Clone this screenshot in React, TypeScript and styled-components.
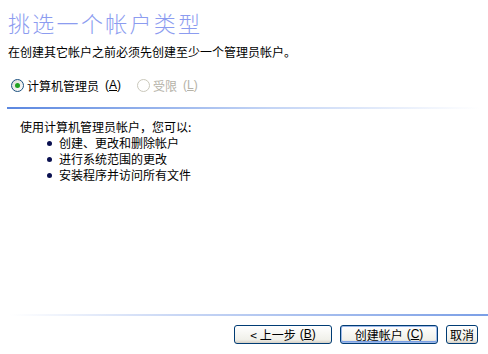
import React from "react";
import styled, { createGlobalStyle } from "styled-components";

const Global = createGlobalStyle`
  html, body {
    margin: 0;
    padding: 0;
    background: #ffffff;
  }
  body {
    font-family: "Liberation Sans", "Noto Sans CJK SC", sans-serif;
    font-size: 12px;
    color: #000;
  }
`;

const Page = styled.div`
  width: 488px;
  height: 354px;
  display: flex;
  flex-direction: column;
  background: #fff;
  overflow: hidden;
`;

const Header = styled.div`
  padding: 7px 0 0 8px;
`;

const Title = styled.h1`
  margin: 0;
  font-family: "Noto Sans CJK SC", sans-serif;
  font-weight: 300;
  font-size: 22px;
  line-height: 30px;
  letter-spacing: 2.3px;
  color: #8c9cf0;
`;

const Subtitle = styled.p`
  margin: 8px 0 0;
  font-family: "Noto Sans CJK SC", sans-serif;
  font-size: 12px;
  line-height: 14px;
`;

const RadioRow = styled.div`
  display: flex;
  align-items: center;
  gap: 16px;
  padding: 18px 0 0 11px;
  height: 16px;
`;

const RadioLabel = styled.label<{ $disabled?: boolean }>`
  display: flex;
  align-items: center;
  gap: 3px;
  font-family: "Noto Sans CJK SC", sans-serif;
  font-size: 12px;
  color: ${(p) => (p.$disabled ? "#b5b2a8" : "#000")};
`;

const RadioDot = styled.span<{ $checked?: boolean; $disabled?: boolean }>`
  position: relative;
  width: 11px;
  height: 11px;
  border-radius: 50%;
  border: 1px solid ${(p) => (p.$disabled ? "#cac8bb" : "#1c5180")};
  background: ${(p) => (p.$disabled ? "#fff" : "linear-gradient(135deg, #dcdad5, #ffffff)")};

  &::after {
    content: "";
    display: ${(p) => (p.$checked ? "block" : "none")};
    position: absolute;
    left: 3px;
    top: 3px;
    width: 5px;
    height: 5px;
    border-radius: 50%;
    background: #21a121;
  }
`;

const Key = styled.span`
  font-family: "Liberation Sans", sans-serif;
  margin-left: 3px;
`;

const Divider = styled.div<{ $reverse?: boolean }>`
  height: 2px;
  margin: ${(p) => (p.$reverse ? "0 0 0 10px" : "14px 8px 0 7px")};
  background: ${(p) =>
    p.$reverse
      ? "linear-gradient(to right, rgba(255,255,255,0), #c9d7f5 35%, #7b9fe6)"
      : "linear-gradient(to right, #5b87e0, #c3d4f5 55%, rgba(255,255,255,0))"};
`;

const Body = styled.div`
  padding: 10px 0 0 20px;
  font-family: "Noto Sans CJK SC", sans-serif;
  font-size: 12px;
  line-height: 16px;
  flex: 1;
`;

const List = styled.ul`
  margin: 0;
  padding: 0 0 0 27px;
  list-style: none;
`;

const Item = styled.li`
  display: flex;
  align-items: center;
  gap: 7px;
  height: 16px;
  line-height: 16px;

  &::before {
    content: "";
    width: 5px;
    height: 5px;
    border-radius: 50%;
    background: #0a1050;
  }
`;

const Footer = styled.div`
  display: flex;
  justify-content: flex-end;
  gap: 8px;
  padding: 9px 10px 10px 0;
`;

const Button = styled.button<{ $w: number }>`
  width: ${(p) => p.$w}px;
  height: 19px;
  padding: 0;
  border: 1px solid #003c74;
  border-radius: 3px;
  background: linear-gradient(to bottom, #ffffff, #f0f0ea 80%, #d6d0c5);
  font-family: "Noto Sans CJK SC", sans-serif;
  font-size: 12px;
  line-height: 15px;
  color: #000;
  display: flex;
  align-items: center;
  justify-content: center;
  gap: 4px;
`;

const DefaultButton = styled(Button)`
  box-shadow: inset 0 0 0 1px #9db8e8, inset 0 -1px 0 1px #7aa0e6;
`;

const Hotkey = styled.span`
  font-family: "Liberation Sans", sans-serif;
  font-size: 12px;
`;

export default function App() {
  return (
    <>
      <Global />
      <Page>
        <Header>
          <Title>挑选一个帐户类型</Title>
          <Subtitle>在创建其它帐户之前必须先创建至少一个管理员帐户。</Subtitle>
        </Header>
        <RadioRow>
          <RadioLabel>
            <RadioDot $checked />
            计算机管理员
            <Key>
              (<u>A</u>)
            </Key>
          </RadioLabel>
          <RadioLabel $disabled>
            <RadioDot $disabled />
            受限
            <Key>
              (<u>L</u>)
            </Key>
          </RadioLabel>
        </RadioRow>
        <Divider />
        <Body>
          使用计算机管理员帐户，您可以:
          <List>
            <Item>创建、更改和删除帐户</Item>
            <Item>进行系统范围的更改</Item>
            <Item>安装程序并访问所有文件</Item>
          </List>
        </Body>
        <Divider $reverse />
        <Footer>
          <Button $w={98}>
            &lt; 上一步
            <Hotkey>
              (<u>B</u>)
            </Hotkey>
          </Button>
          <DefaultButton $w={98}>
            创建帐户
            <Hotkey>
              (<u>C</u>)
            </Hotkey>
          </DefaultButton>
          <Button $w={32}>取消</Button>
        </Footer>
      </Page>
    </>
  );
}
